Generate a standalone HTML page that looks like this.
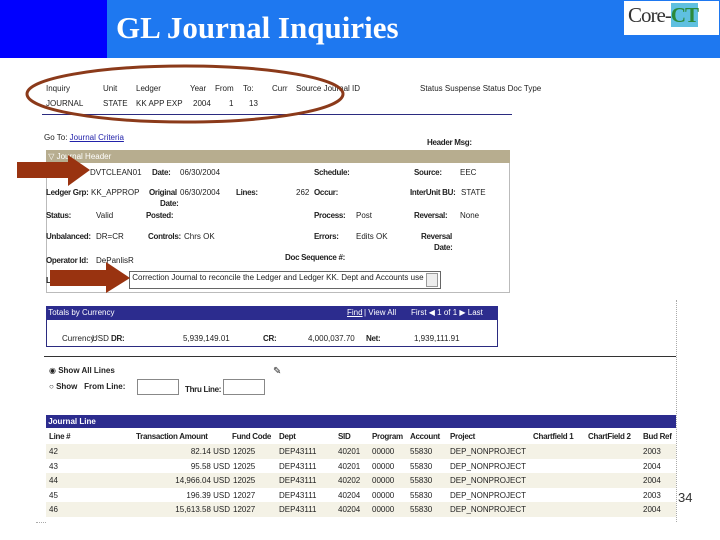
<!DOCTYPE html>
<html><head><style>
body{margin:0;width:720px;height:540px;background:#fff;position:relative;overflow:hidden;font-family:"Liberation Sans",sans-serif;font-size:8px;color:#222}
.a{position:absolute;white-space:nowrap}
.b{font-weight:bold;letter-spacing:-0.3px}
</style></head><body>
<div class="a" style="left:0;top:0;width:107px;height:58px;background:#0000ff"></div>
<div class="a" style="left:107px;top:0;width:613px;height:58px;background:#1e78f0"></div>
<div class="a" style="left:116px;top:10px;font-family:'Liberation Serif',serif;font-weight:bold;font-size:31px;color:#fff">GL Journal Inquiries</div>
<div class="a" style="left:624px;top:1px;width:95px;height:34px;background:#fff"></div>
<div class="a" style="left:628px;top:3px;font-family:'Liberation Serif',serif;font-size:21px;color:#333;letter-spacing:-1px">Core-<span style="color:#2a8a3a;font-weight:bold;background:#5fc0e0">CT</span></div>

<div class="a" style="left:46px;top:84px">Inquiry</div><div class="a" style="left:103px;top:84px">Unit</div><div class="a" style="left:136px;top:84px">Ledger</div><div class="a" style="left:190px;top:84px">Year</div><div class="a" style="left:215px;top:84px">From</div><div class="a" style="left:243px;top:84px">To:</div><div class="a" style="left:272px;top:84px">Curr</div><div class="a" style="left:296px;top:84px">Source Journal ID</div><div class="a" style="left:420px;top:84px">Status Suspense Status Doc Type</div>
<div class="a" style="left:46px;top:99px">JOURNAL</div><div class="a" style="left:103px;top:99px">STATE</div><div class="a" style="left:136px;top:99px">KK APP EXP</div><div class="a" style="left:193px;top:99px">2004</div><div class="a" style="left:229px;top:99px">1</div><div class="a" style="left:249px;top:99px">13</div>
<div class="a" style="left:42px;top:114px;width:470px;height:1px;background:#2b2b80"></div>

<div class="a" style="left:44px;top:133px">Go To: <span style="color:#22a;text-decoration:underline">Journal Criteria</span></div>
<div class="a b" style="left:427px;top:138px">Header Msg:</div>

<div class="a" style="left:46px;top:150px;width:462px;height:141px;border:1px solid #bbb"></div>
<div class="a" style="left:46px;top:150px;width:464px;height:13px;background:#b7ad8f;color:#fff;line-height:14px">&nbsp;▽ Journal Header</div>
<div class="a" style="left:90px;top:168px">DVTCLEAN01</div><div class="a b" style="left:152px;top:168px">Date:</div><div class="a" style="left:180px;top:168px">06/30/2004</div><div class="a b" style="left:314px;top:168px">Schedule:</div><div class="a b" style="left:414px;top:168px">Source:</div><div class="a" style="left:460px;top:168px">EEC</div>
<div class="a b" style="left:46px;top:188px">Ledger Grp:</div><div class="a" style="left:91px;top:188px">KK_APPROP</div><div class="a b" style="left:149px;top:188px">Original</div><div class="a" style="left:180px;top:188px">06/30/2004</div><div class="a b" style="left:236px;top:188px">Lines:</div><div class="a" style="left:296px;top:188px">262</div><div class="a b" style="left:314px;top:188px">Occur:</div><div class="a b" style="left:410px;top:188px">InterUnit BU:</div><div class="a" style="left:461px;top:188px">STATE</div>
<div class="a b" style="left:160px;top:199px">Date:</div>
<div class="a b" style="left:46px;top:211px">Status:</div><div class="a" style="left:96px;top:211px">Valid</div><div class="a b" style="left:146px;top:211px">Posted:</div><div class="a b" style="left:314px;top:211px">Process:</div><div class="a" style="left:356px;top:211px">Post</div><div class="a b" style="left:414px;top:211px">Reversal:</div><div class="a" style="left:460px;top:211px">None</div>
<div class="a b" style="left:46px;top:232px">Unbalanced:</div><div class="a" style="left:96px;top:232px">DR=CR</div><div class="a b" style="left:148px;top:232px">Controls:</div><div class="a" style="left:184px;top:232px">Chrs OK</div><div class="a b" style="left:314px;top:232px">Errors:</div><div class="a" style="left:356px;top:232px">Edits OK</div><div class="a b" style="left:421px;top:232px">Reversal</div><div class="a b" style="left:434px;top:243px">Date:</div>
<div class="a b" style="left:46px;top:256px">Operator Id:</div><div class="a" style="left:96px;top:256px">DePanlisR</div><div class="a b" style="left:285px;top:253px">Doc Sequence #:</div>
<div class="a b" style="left:46px;top:276px">L</div>
<div class="a" style="left:129px;top:271px;width:310px;height:16px;border:1px solid #666;overflow:hidden;font-size:8px;line-height:12px">&nbsp;Correction Journal to reconcile the Ledger and Ledger KK. Dept and Accounts use</div>
<div class="a" style="left:426px;top:273px;width:10px;height:12px;border:1px solid #999;background:#eee"></div>

<div class="a" style="left:46px;top:306px;width:450px;height:39px;border:1px solid #2b2b80"></div>
<div class="a" style="left:46px;top:306px;width:452px;height:14px;background:#2c2c8e;color:#fff;line-height:14px">&nbsp;Totals by Currency<span style="position:absolute;left:301px;text-decoration:underline">Find</span><span style="position:absolute;left:318px">| View All</span><span style="position:absolute;left:365px">First ◀ 1 of 1 ▶ Last</span></div>
<div class="a" style="left:62px;top:334px">Currency:</div><div class="a" style="left:92px;top:334px">USD</div><div class="a b" style="left:111px;top:334px">DR:</div><div class="a" style="left:183px;top:334px">5,939,149.01</div><div class="a b" style="left:263px;top:334px">CR:</div><div class="a" style="left:308px;top:334px">4,000,037.70</div><div class="a b" style="left:366px;top:334px">Net:</div><div class="a" style="left:414px;top:334px">1,939,111.91</div>

<div class="a" style="left:44px;top:356px;width:632px;height:1px;background:#333"></div>
<div class="a" style="left:676px;top:300px;width:0;height:222px;border-left:1px dotted #aaa"></div>
<div class="a" style="left:36px;top:522px;width:640px;height:0;border-top:1px dotted #aaa"></div>

<div class="a" style="left:49px;top:366px">◉ <b>Show All Lines</b></div>
<div class="a" style="left:49px;top:382px">○ <b>Show</b> &nbsp;&nbsp;<b>From Line:</b></div>
<div class="a" style="left:137px;top:379px;width:40px;height:14px;border:1px solid #888"></div>
<div class="a b" style="left:185px;top:385px">Thru Line:</div>
<div class="a" style="left:223px;top:379px;width:40px;height:14px;border:1px solid #888"></div>
<div class="a" style="left:273px;top:366px;font-size:10px">✎</div>

<div class="a" style="left:46px;top:415px;width:630px;height:13px;background:#2c2c8e;color:#fff;line-height:13px;font-weight:bold">&nbsp;Journal Line</div>
<div class="a b" style="left:46px;top:429px;width:630px;height:94px;background:#fff;overflow:hidden">
<div style="position:absolute;left:0;top:0;width:630px;font-weight:bold;text-decoration:underline;height:14px;line-height:16px">
<span style="position:absolute;left:3px">Line #</span><span style="position:absolute;left:90px">Transaction Amount</span><span style="position:absolute;left:186px">Fund Code</span><span style="position:absolute;left:233px">Dept</span><span style="position:absolute;left:292px">SID</span><span style="position:absolute;left:326px">Program</span><span style="position:absolute;left:364px">Account</span><span style="position:absolute;left:404px">Project</span><span style="position:absolute;left:487px">Chartfield 1</span><span style="position:absolute;left:542px">ChartField 2</span><span style="position:absolute;left:597px">Bud Ref</span></div>
</div>
<div class="a" style="left:46px;top:444px;width:630px;font-weight:normal">
<div style="height:14.5px;background:#f4f2e6;position:relative;line-height:15px"><span style="position:absolute;left:3px">42</span><span style="position:absolute;right:446px">82.14 USD</span><span style="position:absolute;left:187px">12025</span><span style="position:absolute;left:233px">DEP43111</span><span style="position:absolute;left:292px">40201</span><span style="position:absolute;left:326px">00000</span><span style="position:absolute;left:364px">55830</span><span style="position:absolute;left:404px">DEP_NONPROJECT</span><span style="position:absolute;left:597px">2003</span></div>
<div style="height:14.5px;background:#fff;position:relative;line-height:15px"><span style="position:absolute;left:3px">43</span><span style="position:absolute;right:446px">95.58 USD</span><span style="position:absolute;left:187px">12025</span><span style="position:absolute;left:233px">DEP43111</span><span style="position:absolute;left:292px">40201</span><span style="position:absolute;left:326px">00000</span><span style="position:absolute;left:364px">55830</span><span style="position:absolute;left:404px">DEP_NONPROJECT</span><span style="position:absolute;left:597px">2004</span></div>
<div style="height:14.5px;background:#f4f2e6;position:relative;line-height:15px"><span style="position:absolute;left:3px">44</span><span style="position:absolute;right:446px">14,966.04 USD</span><span style="position:absolute;left:187px">12025</span><span style="position:absolute;left:233px">DEP43111</span><span style="position:absolute;left:292px">40202</span><span style="position:absolute;left:326px">00000</span><span style="position:absolute;left:364px">55830</span><span style="position:absolute;left:404px">DEP_NONPROJECT</span><span style="position:absolute;left:597px">2004</span></div>
<div style="height:14.5px;background:#fff;position:relative;line-height:15px"><span style="position:absolute;left:3px">45</span><span style="position:absolute;right:446px">196.39 USD</span><span style="position:absolute;left:187px">12027</span><span style="position:absolute;left:233px">DEP43111</span><span style="position:absolute;left:292px">40204</span><span style="position:absolute;left:326px">00000</span><span style="position:absolute;left:364px">55830</span><span style="position:absolute;left:404px">DEP_NONPROJECT</span><span style="position:absolute;left:597px">2003</span></div>
<div style="height:14.5px;background:#f4f2e6;position:relative;line-height:15px"><span style="position:absolute;left:3px">46</span><span style="position:absolute;right:446px">15,613.58 USD</span><span style="position:absolute;left:187px">12027</span><span style="position:absolute;left:233px">DEP43111</span><span style="position:absolute;left:292px">40204</span><span style="position:absolute;left:326px">00000</span><span style="position:absolute;left:364px">55830</span><span style="position:absolute;left:404px">DEP_NONPROJECT</span><span style="position:absolute;left:597px">2004</span></div>
<div style="height:6px;background:#fff;overflow:hidden;position:relative;line-height:15px"></div>
</div>
<div class="a" style="left:678px;top:490px;font-size:13px;color:#333">34</div>

<svg class="a" style="left:0;top:0" width="720" height="540">
<ellipse cx="185" cy="94" rx="158" ry="28" fill="none" stroke="#8b3a1a" stroke-width="3"/>
<polygon points="17,162 68,162 68,155 90,170 68,186 68,178 17,178" fill="#993310"/>
<polygon points="50,270 106,270 106,262 130,278 106,293 106,286 50,286" fill="#993310"/>
</svg>
</body></html>
